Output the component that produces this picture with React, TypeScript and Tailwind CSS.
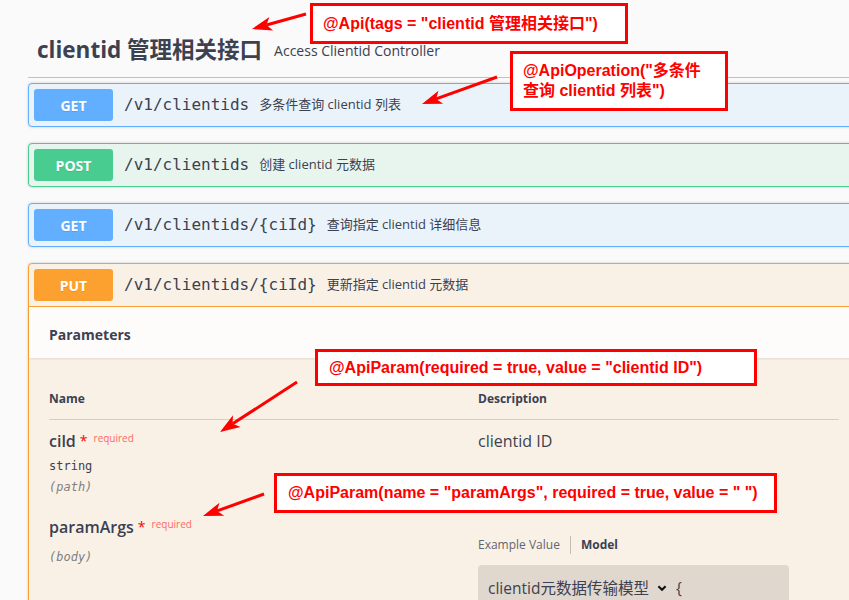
import React from 'react';

const ops = [
  { method: 'GET', path: '/v1/clientids', desc: '多条件查询 clientid 列表', badge: 'bg-[#61affe]', box: 'border-[#61affe] bg-[#ebf3fa]' },
  { method: 'POST', path: '/v1/clientids', desc: '创建 clientid 元数据', badge: 'bg-[#49cc90]', box: 'border-[#49cc90] bg-[#e8f5ef]' },
  { method: 'GET', path: '/v1/clientids/{ciId}', desc: '查询指定 clientid 详细信息', badge: 'bg-[#61affe]', box: 'border-[#61affe] bg-[#ebf3fa]' },
];

const arrows = [
  { x1: 306, y1: 14, x2: 252, y2: 29 },
  { x1: 497, y1: 77, x2: 422, y2: 104 },
  { x1: 297, y1: 382, x2: 220, y2: 432 },
  { x1: 264, y1: 494, x2: 203, y2: 516 },
];

const sans = 'font-["Open_Sans","Noto_Sans_CJK_SC",sans-serif]';
const mono = 'font-["DejaVu_Sans_Mono",monospace]';

const Arrow = ({ x1, y1, x2, y2 }: { x1: number; y1: number; x2: number; y2: number }) => {
  // arrowhead pointing at (x2, y2)
  const dx = x2 - x1;
  const dy = y2 - y1;
  const len = Math.hypot(dx, dy);
  const ux = dx / len;
  const uy = dy / len;
  const head = 20;
  const half = 7;
  const bx = x2 - ux * head;
  const by = y2 - uy * head;
  const nx = x2 - ux * (head - 5);
  const ny = y2 - uy * (head - 5);
  const pts = `${x2},${y2} ${bx - uy * half},${by + ux * half} ${nx},${ny} ${bx + uy * half},${by - ux * half}`;
  return (
    <g>
      <line x1={x1} y1={y1} x2={nx} y2={ny} stroke="#ff0000" strokeWidth={3} />
      <polygon points={pts} fill="#ff0000" />
    </g>
  );
};

const Badge = ({ method, color }: { method: string; color: string }) => (
  <div className={`${color} w-[79px] h-[32px] rounded-[3px] flex items-center justify-center text-white text-[14px] font-bold [text-shadow:0_1px_0_rgba(0,0,0,0.1)]`}>
    {method}
  </div>
);

const Summary = ({ method, path, desc, badge }: { method: string; path: string; desc: string; badge: string }) => (
  <div className="flex items-center p-[5px]">
    <Badge method={method} color={badge} />
    <span className={`${mono} text-[16px] text-[#3b4151] pl-[11px] pr-[10px]`}>{path}</span>
    <span className="text-[13px] text-[#3b4151]">{desc}</span>
  </div>
);

const Note = ({ className, children }: { className: string; children: React.ReactNode }) => (
  <div className={`absolute bg-white border-[3px] border-[#ff0000] text-[#ff0000] font-bold text-[16px] leading-[20px] font-["Liberation_Sans","Noto_Sans_CJK_SC",sans-serif] ${className}`}>
    {children}
  </div>
);

const ParamName = ({ name }: { name: string }) => (
  <div className="flex items-start h-[22px]">
    <span className="text-[16px] font-semibold text-[#3b4151] leading-[22px]">{name}</span>
    <span className="text-[#ff0000] text-[14px] leading-[22px] ml-[4px]">*</span>
    <span className="text-[10px] text-[#ff0000]/60 ml-[6px] leading-[14px] mt-[1px]">required</span>
  </div>
);

export default function App() {
  return (
    <div className={`relative w-[849px] h-[600px] overflow-hidden bg-[#fafafa] ${sans}`}>
      <div className="w-[860px] pl-[28px] pt-[27px]">
        {/* tag heading */}
        <div className="flex items-center h-[51px] pl-[9px] pb-[4px] border-b border-[#3b4151]/30 mb-[5px]">
          <span className="text-[22.5px] font-bold text-[#3b4151]">clientid 管理相关接口</span>
          <span className="text-[14px] text-[#3b4151] ml-[12px]">Access Clientid Controller</span>
        </div>

        {ops.map((op, i) => (
          <div key={i} className={`border rounded-[4px] mb-[16px] shadow-[0_0_3px_rgba(0,0,0,0.19)] ${op.box}`}>
            <Summary method={op.method} path={op.path} desc={op.desc} badge={op.badge} />
          </div>
        ))}

        {/* expanded PUT */}
        <div className="border border-[#fca130] bg-[#faf1e6] rounded-[4px] shadow-[0_0_3px_rgba(0,0,0,0.19)]">
          <div className="border-b border-[#fca130]">
            <Summary method="PUT" path="/v1/clientids/{ciId}" desc="更新指定 clientid 元数据" badge="bg-[#fca130]" />
          </div>
          <div className="h-[51px] flex items-center px-[20px] pt-[3px] bg-white/80 shadow-[0_1px_2px_rgba(0,0,0,0.1)]">
            <span className="text-[14px] font-bold text-[#3b4151]">Parameters</span>
          </div>
          <div className="px-[20px] pt-[21px] pb-[40px]">
            <div className="flex border-b border-[#3b4151]/20 py-[12px] text-[12px] font-bold text-[#3b4151] leading-[16px]">
              <div className="w-[429px]">Name</div>
              <div>Description</div>
            </div>

            {/* cild */}
            <div className="flex py-[10px]">
              <div className="w-[429px]">
                <ParamName name="cild" />
                <div className={`${mono} text-[12px] text-[#3b4151] pt-[6px] pb-[4px] leading-[16px]`}>string</div>
                <div className={`${mono} text-[12px] italic text-[#808080] leading-[18px]`}>(path)</div>
              </div>
              <div className="text-[16px] text-[#3b4151] leading-[22px]">clientid ID</div>
            </div>

            {/* paramArgs */}
            <div className="flex py-[10px]">
              <div className="w-[429px]">
                <ParamName name="paramArgs" />
                <div className="h-[10px]" />
                <div className={`${mono} text-[12px] italic text-[#808080] leading-[18px]`}>(body)</div>
              </div>
              <div className="pt-[20px]">
                <div className="flex items-center text-[12px] text-[#3b4151] leading-[16px]">
                  <span className="opacity-80">Example Value</span>
                  <span className="w-px h-[18px] bg-[#3b4151]/30 mx-[10px]" />
                  <span className="font-bold">Model</span>
                </div>
                <div className="mt-[11px] w-[311px] h-[80px] rounded-[4px] bg-black/10 px-[10px] pt-[11px]">
                  <div className="flex items-center text-[15.5px] text-[#3b4151] leading-[24px]">
                    <span>clientid元数据传输模型</span>
                    <svg width="12" height="12" viewBox="0 0 20 20" className="ml-[7px] mr-[8px]">
                      <path d="M4 7l6 6 6-6" stroke="#111" strokeWidth="3.5" fill="none" />
                    </svg>
                    <span>{'{'}</span>
                  </div>
                </div>
              </div>
            </div>
          </div>
        </div>
      </div>

      {/* annotations */}
      <Note className="left-[310px] top-[3px] w-[318px] h-[41px] pl-[10px] flex items-center">
        @Api(tags = "clientid 管理相关接口")
      </Note>
      <Note className="left-[510px] top-[51px] w-[218px] h-[60px] pl-[10px] pt-[7px]">
        @ApiOperation("多条件<br />查询 clientid 列表")
      </Note>
      <Note className="left-[315px] top-[349px] w-[442px] h-[37px] pl-[11px] flex items-center">
        @ApiParam(required = true, value = "clientid ID")
      </Note>
      <Note className="left-[274px] top-[473px] w-[503px] h-[40px] pl-[11px] flex items-center">
        @ApiParam(name = "paramArgs", required = true, value = " ")
      </Note>

      <svg className="absolute left-0 top-0 pointer-events-none" width="849" height="600">
        {arrows.map((a, i) => (
          <Arrow key={i} {...a} />
        ))}
      </svg>
    </div>
  );
}
